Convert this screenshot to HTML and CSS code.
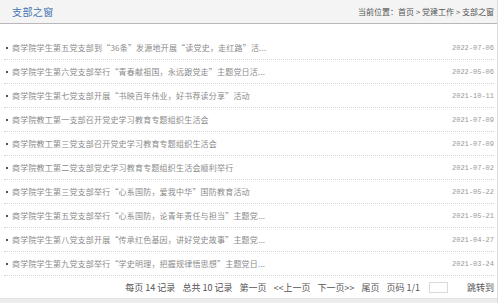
FILE: index.html
```html
<!DOCTYPE html>
<html lang="zh-CN">
<head>
  <meta charset="UTF-8">
  <title>支部之窗</title>
  <link rel="stylesheet" href="styles.css">
</head>
<body>
  <div class="page">
    <div class="bar">
      <span class="title">支部之窗</span>
      <span class="crumb">当前位置：首页 &gt; 党建工作 &gt; 支部之窗</span>
    </div>

    <ul class="news">
      <li><span class="dot"></span><a href="#">商学院学生第五党支部到“36条”发源地开展“读党史，走红路”活...</a><span class="date">2022-07-06</span></li>
      <li><span class="dot"></span><a href="#">商学院学生第六党支部举行“青春献祖国，永远跟党走”主题党日活...</a><span class="date">2022-05-06</span></li>
      <li><span class="dot"></span><a href="#">商学院学生第七党支部开展“书映百年伟业，好书荐读分享”活动</a><span class="date">2021-10-11</span></li>
      <li><span class="dot"></span><a href="#">商学院教工第一支部召开党史学习教育专题组织生活会</a><span class="date">2021-07-09</span></li>
      <li><span class="dot"></span><a href="#">商学院教工第三党支部召开党史学习教育专题组织生活会</a><span class="date">2021-07-09</span></li>
      <li><span class="dot"></span><a href="#">商学院教工第二党支部党史学习教育专题组织生活会顺利举行</a><span class="date">2021-07-02</span></li>
      <li><span class="dot"></span><a href="#">商学院学生第三党支部举行“心系国防，爱我中华”国防教育活动</a><span class="date">2021-05-22</span></li>
      <li><span class="dot"></span><a href="#">商学院学生第五党支部举行“心系国防，论青年责任与担当”主题党...</a><span class="date">2021-05-21</span></li>
      <li><span class="dot"></span><a href="#">商学院学生第八党支部开展“传承红色基因，讲好党史故事”主题党...</a><span class="date">2021-04-27</span></li>
      <li><span class="dot"></span><a href="#">商学院学生第九党支部举行“学史明理，把握规律悟思想”主题党日...</a><span class="date">2021-03-24</span></li>
    </ul>

    <div class="pager">
      <span>每页 14 记录</span>
      <span>总共 10 记录</span>
      <span>第一页</span>
      <span>&lt;&lt;上一页</span>
      <span>下一页&gt;&gt;</span>
      <span>尾页</span>
      <span>页码 1/1</span>
      <input type="text" class="jump">
      <span class="go">跳转到</span>
    </div>

    <div class="foot"></div>
  </div>
</body>
</html>
```

FILE: styles.css
```css
body { margin: 0; background: #fff; font-family: "Noto Sans CJK SC", sans-serif; }
.page { width: 497px; border-right: 1px solid #dcdcdc; height: 303px; display: flex; flex-direction: column; }

.bar { height: 23px; background: #f4f4f4; border-bottom: 1px solid #b8b8b8; display: flex; align-items: center; justify-content: space-between; padding: 0 3px 0 12px; }
.bar .title { font-size: 10px; color: #4472b2; letter-spacing: 0.4px; }
.bar .crumb { font-size: 8px; color: #555; }

.news { list-style: none; margin: 12px 0 0; padding: 0 3px 0 4px; }
.news li { height: 23px; border-bottom: 1px dotted #d4d4d4; display: flex; align-items: center; }
.news .dot { width: 2px; height: 2px; background: #555; margin: 0 4px 0 2px; }
.news a { flex: 1; font-size: 8px; color: #8a8a8a; letter-spacing: 0.2px; text-decoration: none; white-space: nowrap; overflow: hidden; }
.news .date { font-family: "Liberation Mono", monospace; font-size: 7px; color: #999; }

.pager { height: 22px; display: flex; align-items: center; justify-content: flex-end; gap: 7px; padding-right: 3px; font-size: 9px; color: #555; }
.pager span { white-space: nowrap; }
.pager .jump { width: 17px; height: 9px; border: 1px solid #dadada; padding: 0; margin: 0 7px 0 2px; }
.pager .go { margin-left: 5px; }

.foot { flex: 1; background: #ededed; border-top: 1px solid #e2e2e2; }
```
